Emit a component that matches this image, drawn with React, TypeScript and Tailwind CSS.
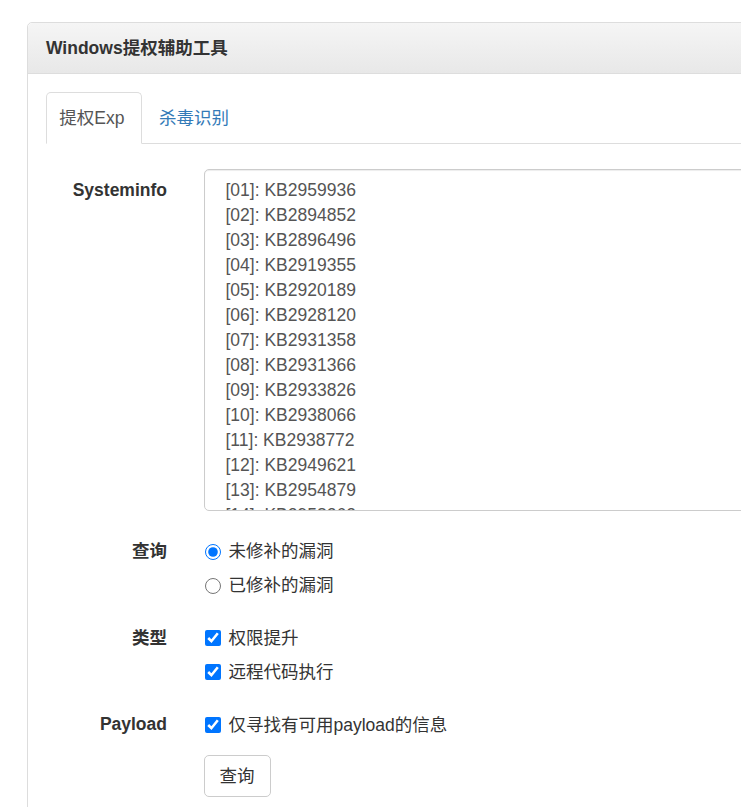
import React from "react";

const hotfixes = [
  "KB2959936",
  "KB2894852",
  "KB2896496",
  "KB2919355",
  "KB2920189",
  "KB2928120",
  "KB2931358",
  "KB2931366",
  "KB2933826",
  "KB2938066",
  "KB2938772",
  "KB2949621",
  "KB2954879",
  "KB2958262",
  "KB2958263",
  "KB2961072",
  "KB2965500",
  "KB2966407",
];

const systeminfo = hotfixes
  .map((kb, i) => `[${String(i + 1).padStart(2, "0")}]: ${kb}`)
  .join("\n");

const FormRow: React.FC<{ label: string; children: React.ReactNode }> = ({
  label,
  children,
}) => (
  <div className="flex mb-[18.75px]">
    <label className="w-[139px] shrink-0 text-right font-bold pt-[8.75px] text-[#333]">
      {label}
    </label>
    <div className="ml-[36.5px] flex-1">{children}</div>
  </div>
);

const Option: React.FC<{
  type: "radio" | "checkbox";
  label: string;
  checked?: boolean;
  name?: string;
}> = ({ type, label, checked, name }) => (
  <label className="flex items-center pt-[9px] h-[34px] cursor-pointer">
    <input
      type={type}
      name={name}
      defaultChecked={checked}
      className="w-[16px] h-[16px] ml-[1px] mr-[8px] m-0 accent-[#0075ff]"
    />
    <span>{label}</span>
  </label>
);

export default function App() {
  return (
    <div
      className="w-full h-[807px] overflow-hidden bg-white pt-[22px] pl-[27px] text-[17.5px] leading-[25px] text-[#333]"
      style={{ fontFamily: '"Liberation Sans", Arial, "Noto Sans CJK SC", sans-serif' }}
    >
      <div className="w-[950px] border border-[#ddd] rounded-[5px] h-[820px]">
        <div className="h-[51px] flex items-center px-[18px] border-b border-[#ddd] rounded-t-[5px] bg-gradient-to-b from-[#f5f5f5] to-[#e8e8e8]">
          <h3 className="font-bold text-[17.5px]">Windows提权辅助工具</h3>
        </div>

        <div className="p-[18.25px]">
          {/* tabs */}
          <ul className="flex border-b border-[#ddd]">
            <li className="-mb-px mr-[2.5px]">
              <a className="block pl-[12px] pr-[17px] py-[12.5px] border border-[#ddd] border-b-white rounded-t-[5px] bg-white text-[#555]">
                提权Exp
              </a>
            </li>
            <li className="-mb-px">
              <a className="block px-[13px] py-[12.5px] border border-transparent text-[#337ab7]">
                杀毒识别
              </a>
            </li>
          </ul>

          <form className="mt-[25px] -ml-[18.25px]">
            <FormRow label="Systeminfo">
              <textarea
                readOnly
                defaultValue={systeminfo}
                className="block w-full h-[342px] border border-[#ccc] rounded-[5px] py-[7.5px] pl-[21px] pr-[15px] text-[#555] resize-none overflow-hidden outline-none shadow-[inset_0_1px_1px_rgba(0,0,0,0.075)]"
                style={{ fontFamily: "inherit", fontSize: "17.5px", lineHeight: "25px" }}
              />
            </FormRow>

            <FormRow label="查询">
              <Option type="radio" name="scope" label="未修补的漏洞" checked />
              <Option type="radio" name="scope" label="已修补的漏洞" />
            </FormRow>

            <FormRow label="类型">
              <Option type="checkbox" label="权限提升" checked />
              <Option type="checkbox" label="远程代码执行" checked />
            </FormRow>

            <FormRow label="Payload">
              <Option type="checkbox" label="仅寻找有可用payload的信息" checked />
            </FormRow>

            <div className="flex -mt-[1px]">
              <div className="w-[139px] shrink-0" />
              <div className="ml-[36.5px]">
                <button
                  type="button"
                  className="h-[42px] px-[15px] border border-[#ccc] rounded-[5px] bg-white text-[#333]"
                >
                  查询
                </button>
              </div>
            </div>
          </form>
        </div>
      </div>
    </div>
  );
}
